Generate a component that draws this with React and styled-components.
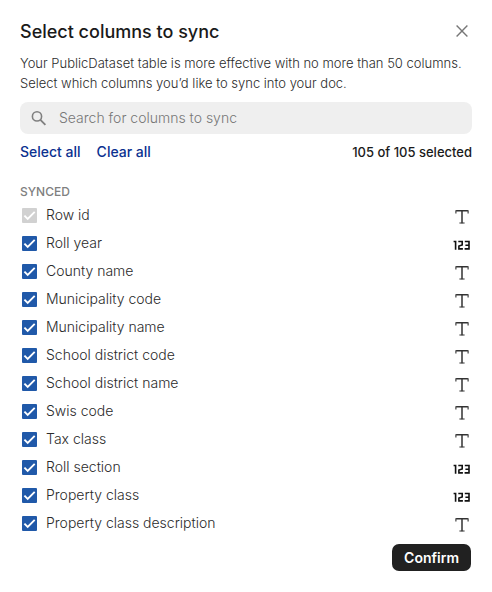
import React, { useState } from "react";
import styled, { createGlobalStyle } from "styled-components";

const GlobalStyle = createGlobalStyle`
  *, *::before, *::after { box-sizing: border-box; }
  body {
    margin: 0;
    background: #fff;
    color: #2b2b2b;
    font-family: Inter, "Liberation Sans", sans-serif;
    font-size: 14px;
    font-weight: 300;
    line-height: 20px;
  }
  button, input { font: inherit; }
`;

const Dialog = styled.main`
  display: flex;
  flex-direction: column;
  padding: 20px;
`;

const Header = styled.header`
  display: flex;
  align-items: center;
  justify-content: space-between;
  height: 24px;
`;

const Title = styled.h1`
  margin: 0;
  color: #1a1a1a;
  font-size: 18px;
  font-weight: 500;
  line-height: 24px;
`;

const CloseButton = styled.button`
  display: flex;
  padding: 0 4px 2px;
  border: 0;
  background: none;
  color: #777;
  cursor: pointer;
`;

const Description = styled.p`
  margin: 9px 0;
  font-size: 13px;
`;

const SearchField = styled.label`
  display: flex;
  align-items: center;
  gap: 12px;
  height: 32px;
  padding: 0 11px;
  border-radius: 8px;
  background: #efefef;
  color: #808080;
`;

const SearchInput = styled.input`
  flex: 1;
  min-width: 0;
  padding: 0;
  border: 0;
  outline: 0;
  background: none;
  color: #2b2b2b;
  &::placeholder { color: #777; opacity: 1; }
`;

const Toolbar = styled.div`
  display: flex;
  align-items: center;
  gap: 16px;
  margin-top: 8px;
`;

const TextButton = styled.button`
  padding: 0;
  border: 0;
  background: none;
  color: #0b3190;
  font-weight: 500;
  cursor: pointer;
`;

const Count = styled.span`
  margin-left: auto;
  color: #1a1a1a;
  font-size: 13px;
  font-weight: 500;
`;

const GroupTitle = styled.h2`
  margin: 20px 0 0;
  color: #808080;
  font-size: 12px;
  font-weight: 500;
  line-height: 19px;
`;

const ColumnList = styled.ul`
  margin: 0;
  padding: 0;
  list-style: none;
`;

const ColumnRow = styled.li`
  display: flex;
  align-items: center;
  justify-content: space-between;
  height: 28px;
  padding: 0 1px 0 2px;
`;

const ColumnLabel = styled.label`
  display: flex;
  align-items: center;
  gap: 9px;
`;

const CheckFrame = styled.span`
  display: grid;
  width: 15px;
  height: 15px;
  > * { grid-area: 1 / 1; }
  svg { pointer-events: none; }
`;

const CheckInput = styled.input`
  appearance: none;
  width: 15px;
  height: 15px;
  margin: 0;
  border: 1px solid #999;
  border-radius: 1px;
  background: #fff;
  &:checked { border: 0; background: #2059a9; }
  &:disabled { background: #d1d1d1; }
`;

const Footer = styled.footer`
  display: flex;
  justify-content: flex-end;
  margin-top: 7px;
  padding-right: 1px;
`;

const ConfirmButton = styled.button`
  height: 27px;
  padding: 0 12px;
  border: 0;
  border-radius: 7px;
  background: #212121;
  color: #fff;
  font-weight: 600;
  line-height: 20px;
  cursor: pointer;
`;

const CloseIcon = () => (
  <svg width="12" height="12" viewBox="0 0 12 12" fill="none" stroke="currentColor" strokeWidth="1.4" aria-hidden="true">
    <path d="M.6.6 11.4 11.4M11.4.6.6 11.4" />
  </svg>
);

const SearchIcon = () => (
  <svg width="16" height="16" viewBox="0 0 16 16" fill="none" stroke="currentColor" strokeWidth="1.6" aria-hidden="true">
    <circle cx="6" cy="6.4" r="4.6" />
    <path d="m9.4 9.8 5 5" strokeWidth="1.9" />
  </svg>
);

const CheckIcon = () => (
  <svg width="15" height="15" viewBox="0 0 15 15" fill="none" stroke="#fff" strokeWidth="1.9" aria-hidden="true">
    <path d="m2.4 7.6 3.3 3.3 7-7" />
  </svg>
);

const TextIcon = () => (
  <svg width="18" height="18" viewBox="0 -1 18 18" fill="none" stroke="#333" role="img" aria-label="Text">
    <path d="M3.1 3.8h11.8M9 3.8v12.4" strokeWidth="1.5" />
    <path d="M2.9 3.2v3.4M15.1 3.2v3.4M6.4 16h5.2" strokeWidth="1.1" />
  </svg>
);

const NumberIcon = () => (
  <svg width="18" height="18" viewBox="0 -1 18 18" fill="none" stroke="#111" strokeWidth="1.6" role="img" aria-label="Number">
    <path d="M.6 6.5h2v8.2M5.3 6.5h3.9v3.4l-3.3 1.2v2.8h4M11.8 6.5h4.2v7.4h-4.4M12.4 10.2h3.4" />
  </svg>
);

const columns = [
  { name: "Row id", type: "text", locked: true },
  { name: "Roll year", type: "number" },
  { name: "County name", type: "text" },
  { name: "Municipality code", type: "text" },
  { name: "Municipality name", type: "text" },
  { name: "School district code", type: "text" },
  { name: "School district name", type: "text" },
  { name: "Swis code", type: "text" },
  { name: "Tax class", type: "text" },
  { name: "Roll section", type: "number" },
  { name: "Property class", type: "number" },
  { name: "Property class description", type: "text" },
];

const TOTAL = 105;

export default function App() {
  const [unselected, setUnselected] = useState([]);
  const toggle = (name) =>
    setUnselected((list) =>
      list.includes(name) ? list.filter((n) => n !== name) : [...list, name]
    );
  const clear = () => setUnselected(columns.filter((c) => !c.locked).map((c) => c.name));

  return (
    <>
      <GlobalStyle />
      <Dialog>
        <Header>
          <Title>Select columns to sync</Title>
          <CloseButton type="button" aria-label="Close"><CloseIcon /></CloseButton>
        </Header>
        <Description>
          Your PublicDataset table is more effective with no more than 50 columns. Select which columns you’d like to sync into your doc.
        </Description>
        <SearchField>
          <SearchIcon />
          <SearchInput type="text" aria-label="Search for columns to sync" placeholder="Search for columns to sync" />
        </SearchField>
        <Toolbar>
          <TextButton type="button" onClick={() => setUnselected([])}>Select all</TextButton>
          <TextButton type="button" onClick={clear}>Clear all</TextButton>
          <Count>{`${TOTAL - unselected.length} of ${TOTAL} selected`}</Count>
        </Toolbar>
        <GroupTitle>SYNCED</GroupTitle>
        <ColumnList>
          {columns.map(({ name, type, locked }) => (
            <ColumnRow key={name}>
              <ColumnLabel>
                <CheckFrame>
                  <CheckInput
                    type="checkbox"
                    disabled={locked}
                    checked={!unselected.includes(name)}
                    onChange={() => toggle(name)}
                  />
                  <CheckIcon />
                </CheckFrame>
                {name}
              </ColumnLabel>
              {type === "text" ? <TextIcon /> : <NumberIcon />}
            </ColumnRow>
          ))}
        </ColumnList>
        <Footer>
          <ConfirmButton type="button">Confirm</ConfirmButton>
        </Footer>
      </Dialog>
    </>
  );
}
